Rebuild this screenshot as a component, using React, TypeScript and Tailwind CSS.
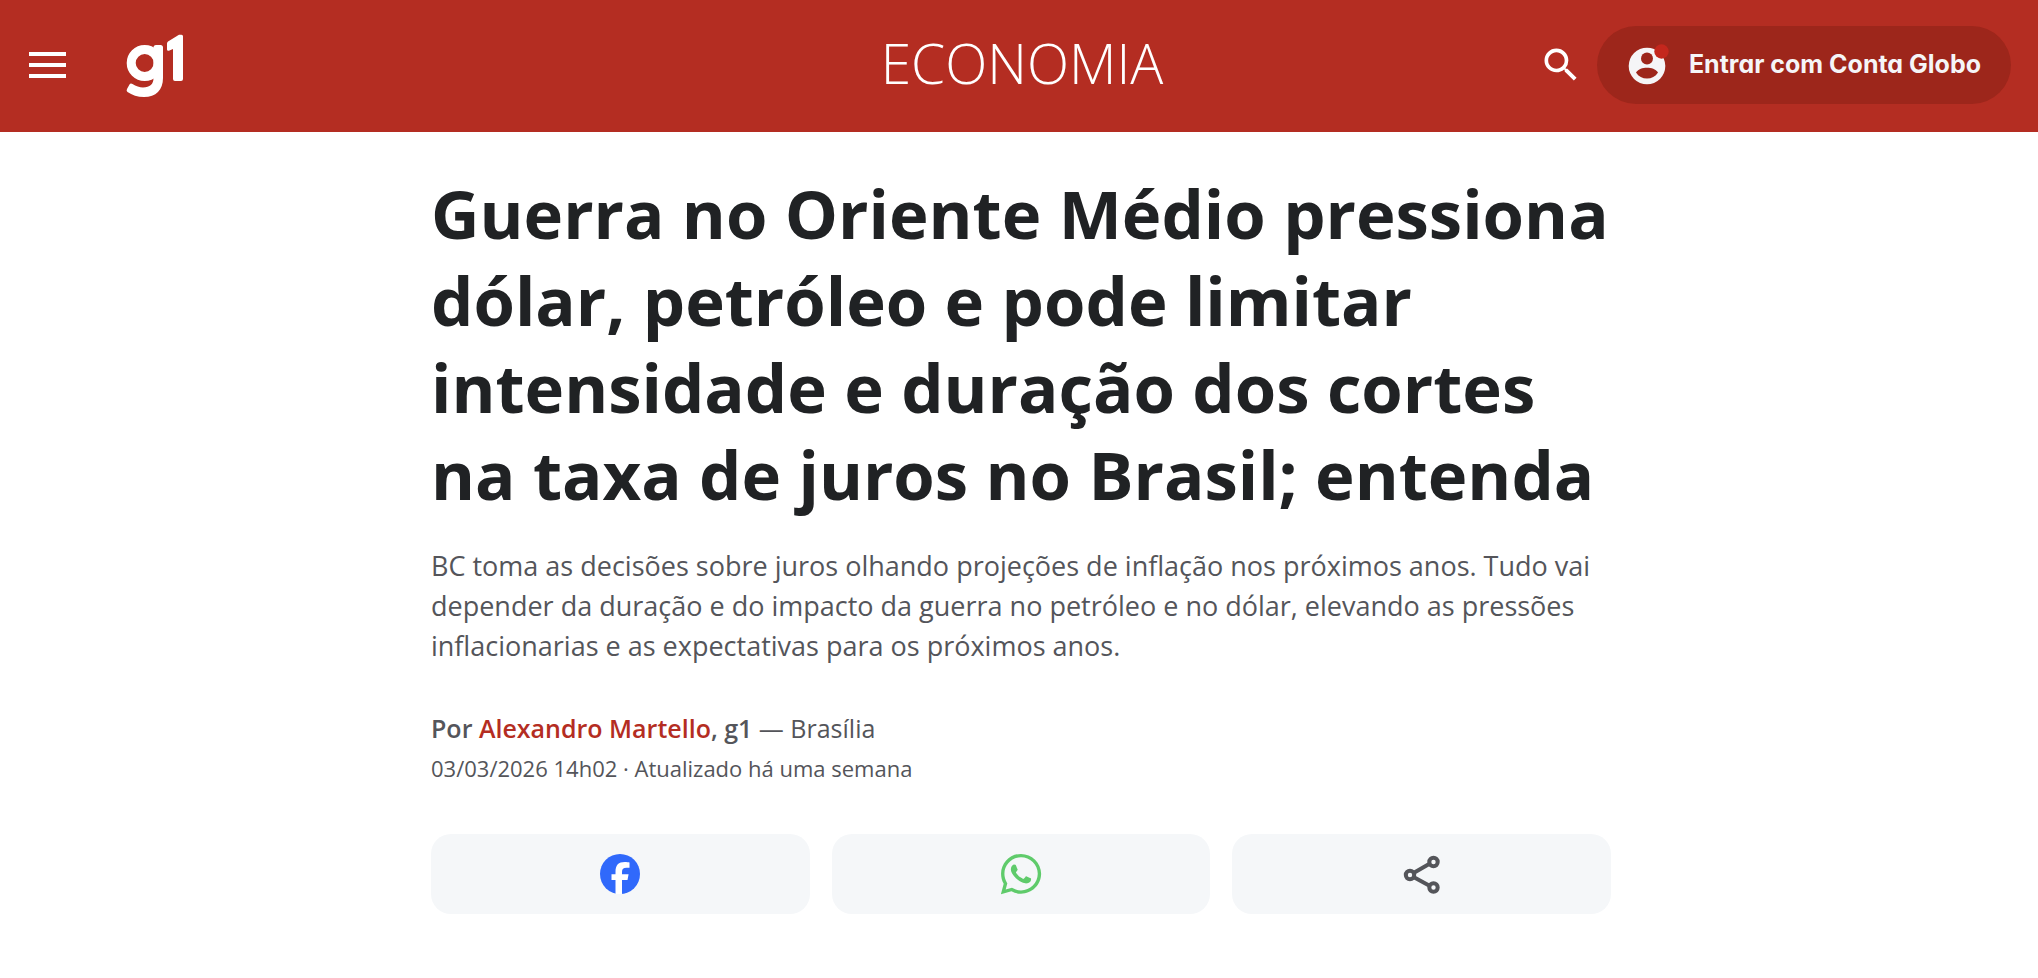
import { FaWhatsapp } from 'react-icons/fa6';
import { MdSearch } from 'react-icons/md';
import type { ReactNode } from 'react';

type ShareOption = {
  label: string;
  icon: ReactNode;
};

const G1Logo = () => (
  <svg width="57" height="63" viewBox="0 0 57 63" fill="#fff" aria-hidden="true">
    <circle cx="18.7" cy="29" r="13.5" fill="none" stroke="#fff" strokeWidth="9" />
    <path d="M30 11h4.5a2.5 2.5 0 0 1 2.5 2.5V44C37 56 30 63 18 63C11.5 63 6 61 1.5 58Q0 57 1 55L3.5 50.5Q4.5 49 6.5 50C10 52 13.5 53.5 17 53.5C24 53.5 27.5 50 27.5 44V13.5a2.5 2.5 0 0 1 2.5-2.5z" />
    <path d="M53 .8h2.5q1.5 0 1.5 1.5V45q0 2-2 2h-6q-2 0-2-2V15l-3.5 1.6q-2.5.8-2.5-1.2V9.5q0-1.2 1-2z" />
  </svg>
);

const MenuIcon = () => (
  <svg width="38" height="28" viewBox="0 0 38 28" fill="#fff" aria-hidden="true">
    <path d="M0 1h37v4H0zM0 12h37v4H0zM0 23h37v4H0z" />
  </svg>
);

const AccountIcon = () => (
  <svg width="44" height="44" viewBox="0 0 44 44" aria-hidden="true">
    <circle cx="20" cy="23" r="18.3" fill="#f5f5f7" />
    <circle cx="20" cy="15.5" r="6" fill="#9d261b" />
    <path
      d="M9 29.5C11.5 26 15.5 24.8 20 24.8s8.5 1.2 11 4.7C28.5 33.5 24.5 35.5 20 35.5S11.5 33.5 9 29.5z"
      fill="#9d261b"
    />
    <circle cx="34.5" cy="8.5" r="7.2" fill="#c4271d" />
  </svg>
);

const FacebookIcon = () => (
  <svg width="40" height="40" viewBox="0 0 40 40" aria-hidden="true">
    <circle cx="20" cy="20" r="20" fill="#3069fb" />
    <path
      d="M15.5 40V26h-4v-5.7h4v-2.5C15.5 11 18.5 8 24.8 8c1.8 0 3.6.2 4.7.5v5.2h-3c-3.2 0-4.5 1.2-4.5 4.3v2.3h6.6L27.5 26H22v14z"
      fill="#fff"
    />
  </svg>
);

const ShareIcon = () => (
  <svg
    width="40"
    height="40"
    viewBox="0 0 40 40"
    fill="none"
    stroke="#54555a"
    strokeWidth="4"
    aria-hidden="true"
  >
    <path d="M11.5 19L28 9.5M11.5 23L28 32" />
    <circle cx="31.5" cy="8" r="4.2" />
    <circle cx="8" cy="21" r="4.2" />
    <circle cx="31.5" cy="33.5" r="4.2" />
  </svg>
);

const shareOptions: ShareOption[] = [
  { label: 'Compartilhar no Facebook', icon: <FacebookIcon /> },
  { label: 'Compartilhar no WhatsApp', icon: <FaWhatsapp size={46} color="#5fcb6b" /> },
  { label: 'Mais opções de compartilhamento', icon: <ShareIcon /> },
];

const Header = () => (
  <header className="grid h-[132px] grid-cols-[1fr_auto_1fr] items-center bg-[#b42d22] pr-[27px] pb-[2px] pl-[29px] text-white">
    <div className="flex items-center gap-[59px]">
      <button type="button" aria-label="Menu">
        <MenuIcon />
      </button>
      <a href="/" aria-label="g1">
        <G1Logo />
      </a>
    </div>
    <a href="/economia" className="pb-1 pl-1 text-[55px] leading-[80px] font-light">
      ECONOMIA
    </a>
    <div className="flex items-center justify-end gap-[14px]">
      <button type="button" aria-label="Buscar">
        <MdSearch size={44} />
      </button>
      <button
        type="button"
        className="flex h-[78px] items-center gap-[18px] rounded-full bg-[#9d261b] px-[30px] font-[Inter,sans-serif] text-[25px] font-bold whitespace-nowrap text-[#f5f5f7] [font-feature-settings:'cv11']"
      >
        <AccountIcon />
        Entrar com Conta Globo
      </button>
    </div>
  </header>
);

const ShareBar = () => (
  <div className="mt-[46px] grid grid-cols-3 gap-[22px]">
    {shareOptions.map((option) => (
      <button
        key={option.label}
        type="button"
        aria-label={option.label}
        className="flex h-20 items-center justify-center rounded-[20px] bg-[#f5f7f9]"
      >
        {option.icon}
      </button>
    ))}
  </div>
);

export default function App() {
  return (
    <div className="min-h-screen bg-white font-['Open_Sans',sans-serif] text-[#54555a]">
      <Header />
      <main className="pl-1">
        <article className="mx-auto max-w-[1180px] pt-[38px]">
          <h1 className="text-[67px] leading-[87px] font-bold text-[#202224]">
            Guerra no Oriente Médio pressiona dólar, petróleo e pode limitar intensidade e duração
            dos cortes na taxa de juros no Brasil; entenda
          </h1>
          <p className="mt-7 text-[27px] leading-10">
            BC toma as decisões sobre juros olhando projeções de inflação nos próximos anos. Tudo
            vai depender da duração e do impacto da guerra no petróleo e no dólar, elevando as
            pressões inflacionarias e as expectativas para os próximos anos.
          </p>
          <p className="mt-[42px] text-[25px] leading-10">
            <span className="font-semibold">
              Por{' '}
              <a href="/autores/alexandro-martello" className="text-[#b42d22]">
                Alexandro Martello
              </a>
              , g1
            </span>{' '}
            — Brasília
          </p>
          <p className="text-[22px] leading-10">
            <time dateTime="2026-03-03T14:02">03/03/2026 14h02</time> · Atualizado há uma semana
          </p>
          <ShareBar />
        </article>
      </main>
    </div>
  );
}
